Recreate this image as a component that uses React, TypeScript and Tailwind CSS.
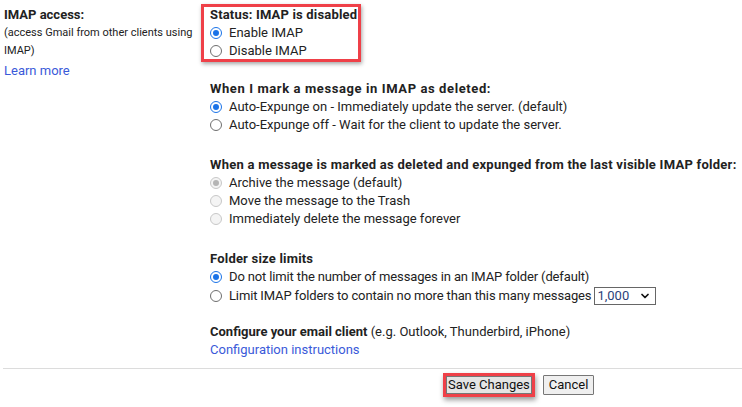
import React from "react";
import { ChevronDown } from "lucide-react";

type RadioProps = {
  label: React.ReactNode;
  checked?: boolean;
  disabled?: boolean;
  tight?: boolean;
};

const Radio = ({ label, checked, disabled, tight }: RadioProps) => (
  <label className="flex items-center h-[18px]">
    <span
      className={`flex items-center justify-center w-[12px] h-[12px] rounded-full border mr-[7px] ${
        disabled
          ? "border-[#c8c8c8] bg-[#f4f4f4]"
          : checked
          ? "border-[#1a73e8] bg-white"
          : "border-[#6e6e6e] bg-white"
      }`}
    >
      {checked && (
        <span
          className={`w-[6px] h-[6px] rounded-full ${
            disabled ? "bg-[#b5b5b5]" : "bg-[#1a73e8]"
          }`}
        />
      )}
    </span>
    <span className={`whitespace-nowrap ${tight ? "tracking-[-0.14px]" : ""}`}>
      {label}
    </span>
  </label>
);

const App = () => {
  return (
    <div className="w-[742px] h-[407px] bg-white text-[#222] text-[13px] leading-[18px] font-['Roboto',sans-serif] overflow-hidden">
      <div className="flex pt-[6px]">
        <div className="w-[210px] pl-[4px] shrink-0">
          <div className="font-bold">IMAP access:</div>
          <div className="text-[11px] leading-[18px]">
            (access Gmail from other clients using IMAP)
          </div>
          <a className="block mt-[2px] text-[#3a5ad9]">Learn more</a>
        </div>

        <div className="flex-1">
          <div className="relative">
            <div className="absolute -left-[9px] -top-[2px] w-[160px] h-[58px] border-[3px] border-[#ef4048] shadow-[1px_2px_4px_rgba(0,0,0,0.35)]" />
            <div className="font-bold tracking-[0.17px]">Status: IMAP is disabled</div>
            <Radio label="Enable IMAP" checked />
            <Radio label="Disable IMAP" />
          </div>

          <div className="mt-[20px]">
            <div className="font-bold tracking-[0.6px]">
              When I mark a message in IMAP as deleted:
            </div>
            <Radio
              label="Auto-Expunge on - Immediately update the server. (default)"
              checked
            />
            <Radio label="Auto-Expunge off - Wait for the client to update the server." />
          </div>

          <div className="mt-[22px]">
            <div className="font-bold tracking-[0.26px] whitespace-nowrap">
              When a message is marked as deleted and expunged from the last
              visible IMAP folder:
            </div>
            <Radio label="Archive the message (default)" checked disabled />
            <Radio label="Move the message to the Trash" disabled />
            <Radio label="Immediately delete the message forever" disabled />
          </div>

          <div className="mt-[22px]">
            <div className="font-bold tracking-[0.2px]">Folder size limits</div>
            <Radio
              label="Do not limit the number of messages in an IMAP folder (default)"
              checked
              tight
            />
            <div className="flex items-center h-[20px]">
              <Radio
                label="Limit IMAP folders to contain no more than this many messages"
                tight
              />
              <div className="ml-[3px] flex items-center justify-between w-[62px] h-[18px] border border-[#666] pl-[2px] pr-[4px] text-[#2b3f7a]">
                <span>1,000</span>
                <ChevronDown className="w-[12px] h-[12px] text-[#111]" strokeWidth={3.5} />
              </div>
            </div>
          </div>

          <div className="mt-[17px]">
            <div>
              <span className="font-bold">Configure your email client</span>{" "}
              (e.g. Outlook, Thunderbird, iPhone)
            </div>
            <a className="block text-[#3a5ad9]">Configuration instructions</a>
          </div>
        </div>
      </div>

      <div className="ml-[3px] mt-[9px] border-t border-[#dcdcdc]" />

      <div className="flex items-center gap-[11px] pl-[446px] pt-[6px]">
        <div className="relative">
          <div className="absolute -left-[3px] -top-[3px] -right-[3px] -bottom-[3px] border-[3px] border-[#ef4048] shadow-[1px_3px_5px_rgba(0,0,0,0.4)]" />
          <button className="h-[18px] px-[1px] bg-[#e4e4e4] border border-[#767676] text-[13px] leading-[16px] text-[#111]">
            Save Changes
          </button>
        </div>
        <button className="h-[20px] px-[5px] bg-[#efefef] border border-[#767676] rounded-[1px] text-[13px] leading-[16px] text-[#111]">
          Cancel
        </button>
      </div>
    </div>
  );
};

export default App;
